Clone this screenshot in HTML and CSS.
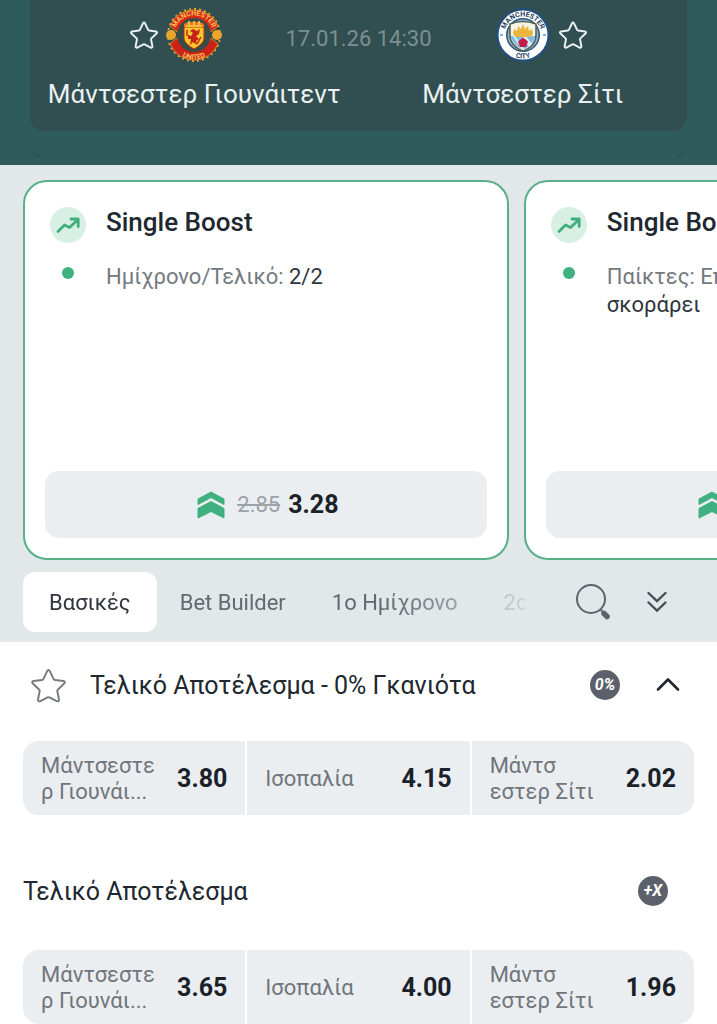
FILE: index.html
```
<!DOCTYPE html>
<html lang="el">
<head>
    <meta charset="UTF-8">
    <meta name="viewport" content="width=device-width, initial-scale=1">
    <title>Μάντσεστερ Γιουνάιτεντ - Μάντσεστερ Σίτι</title>
    <link rel="stylesheet" href="styles.css">
</head>
<body>
<!-- shared icons -->
<svg class="sprite" aria-hidden="true">
    <symbol id="star" viewBox="0 0 36 36">
        <path d="M16.6 3.2Q18 .8 19.4 3.2L23.3 11.4Q23.7 12.2 24.600 12.300L33.300 13.400Q35.800 14 34.100 16L27.500 22.400Q26.900 23 27.100 23.900L28.800 32.400Q28.900 35 26.500 34.100L18.900 30.200Q18 29.800 17.100 30.200L9.500 34.100Q7.100 35 7.200 32.400L8.900 23.900Q9.100 23 8.500 22.400L1.900 16Q.2 14 2.700 13.400L11.400 12.300Q12.300 12.200 12.700 11.400Z" fill="none" stroke="currentColor" stroke-linejoin="round"/>
    </symbol>
    <symbol id="trend" viewBox="0 0 36 36">
        <circle cx="18" cy="18" r="18" fill="#d8f0e4"/>
        <path d="M8 24.500L14.500 18L19.500 20.500L28 12.500M21 12H28.200V19.500" fill="none" stroke="#41ae7e" stroke-width="2.800" stroke-linecap="round" stroke-linejoin="round"/>
    </symbol>
    <symbol id="boost" viewBox="0 0 28 28">
        <path d="M1 8L14 1L27 8V13.500L14 6.500L1 13.500ZM1 17.500L14 10.500L27 17.500V27L14 20.500L1 27Z" fill="#3fb07f" stroke="#3fb07f" stroke-linejoin="round"/>
    </symbol>
</svg>

<header class="header">
    <div class="scoreboard">
        <div class="match">
            <button class="fav" aria-label="Μάντσεστερ Γιουνάιτεντ"><svg><use href="#star"/></svg></button>
            <svg class="crest" viewBox="0 0 56 56" aria-hidden="true">
                <circle cx="28" cy="28" r="26" fill="none" stroke="#e5a42d" stroke-width="2" stroke-dasharray="2 3" pathLength="160"/>
                <circle cx="28" cy="28" r="25" fill="#374c47"/>
                <path d="M4 19A26 26 0 0 1 52 19L45 25A18 18 0 0 0 11 25Z" fill="#d32a18" stroke="#df8a25" stroke-width="1"/>
                <path d="M4 37A26 26 0 0 0 52 37L45 31A18 18 0 0 1 11 31Z" fill="#cb2117" stroke="#df8a25" stroke-width="1"/>
                <circle cx="28" cy="28" r="17" fill="#374c47"/>
                <circle cx="5" cy="28" r="5" fill="#eba52c"/>
                <circle cx="51" cy="28" r="5" fill="#eba52c"/>
                <path d="M18 20H38V32Q37 37 28 42Q19 37 18 32Z" fill="#f5c92e" stroke="#cb2117"/>
                <path d="M18 20V17L22 15H34L38 17V20Z" fill="#e6782c"/>
                <path d="M20 19H36M23 14V18M28 14V18M33 14V18" stroke="#ffd240" stroke-width="1.500"/>
                <path d="M24 24L27 22L31 24L34 22L33 27L30 29L33 32L30 34L31 38L27 35L24 38L25 32L22 32L22 28L25 29L27 26Z" fill="#c82219"/>
                <path d="M21 23V29M35 30L31 37" stroke="#c82219" stroke-width="1.500"/>
                <path id="utd-top" d="M8.500 28A19.500 19.500 0 0 1 47.500 28" fill="none"/>
                <path id="utd-bottom" d="M3.500 28A24.500 24.500 0 0 0 52.500 28" fill="none"/>
                <text class="utd-text"><textPath href="#utd-top" startOffset="50%">MANCHESTER</textPath></text>
                <text class="utd-text"><textPath href="#utd-bottom" startOffset="50%">UNITED</textPath></text>
            </svg>
            <time class="kickoff" datetime="2026-01-17T14:30">17.01.26 14:30</time>
            <svg class="crest" viewBox="0 0 56 56" aria-hidden="true">
                <circle cx="28" cy="28" r="27" fill="#244f7b"/>
                <circle cx="28" cy="28" r="24.500" fill="#fff"/>
                <circle cx="28" cy="28" r="17" fill="#315578"/>
                <circle cx="28" cy="28" r="15.500" fill="#8db4d4"/>
                <path d="M15 17Q28 12 41 17V28Q41 39 28 44Q15 39 15 28Z" fill="#f7f3e5" stroke="#56604f" stroke-width="1.500"/>
                <path d="M16 29H40Q39 38 28 43Q17 38 16 29Z" fill="#82bce6"/>
                <path d="M18 29L27 43H30L20 29ZM27 29L34 40L37 37L31 29Z" fill="#d9edf7"/>
                <path d="M18 27L19 22L22 24L23 19L26 22L28 17L30 22L33 19L34 24L37 22L38 27L35 30H21Z" fill="#eab63d"/>
                <path d="M28 30.500L33 34.500L31 40H25L23 34.500Z" fill="#c41d45"/>
                <path d="M5 28H8M48 28H51" stroke="#7fb2de" stroke-width="2"/>
                <path id="city-top" d="M9.500 28A18.500 18.500 0 0 1 46.500 28" fill="none"/>
                <path id="city-bottom" d="M4.500 28A23.500 23.500 0 0 0 51.500 28" fill="none"/>
                <text class="city-text"><textPath href="#city-top" startOffset="50%">MANCHESTER</textPath></text>
                <text class="city-text"><textPath href="#city-bottom" startOffset="50%">CITY</textPath></text>
            </svg>
            <button class="fav" aria-label="Μάντσεστερ Σίτι"><svg><use href="#star"/></svg></button>
        </div>
        <div class="teams">
            <span>Μάντσεστερ Γιουνάιτεντ</span>
            <span>Μάντσεστερ Σίτι</span>
        </div>
    </div>
    <div class="header-edge"><i></i><i></i></div>
</header>

<section class="boosts">
    <article class="boost-card">
        <svg class="boost-icon"><use href="#trend"/></svg>
        <h2>Single Boost</h2>
        <i class="dot"></i>
        <p>Ημίχρονο/Τελικό: <b>2/2</b></p>
        <button class="boost-odds">
            <svg><use href="#boost"/></svg>
            <s>2.85</s>
            <strong>3.28</strong>
        </button>
    </article>
    <article class="boost-card">
        <svg class="boost-icon"><use href="#trend"/></svg>
        <h2>Single Boost</h2>
        <i class="dot"></i>
        <p>Παίκτες: Επόμενος<br><b>σκοράρει</b></p>
        <button class="boost-odds">
            <svg><use href="#boost"/></svg>
            <s>2.85</s>
            <strong>3.28</strong>
        </button>
    </article>
</section>

<nav class="tabs">
    <div class="tab-list">
        <button class="tab active">Βασικές</button>
        <button class="tab">Bet Builder</button>
        <button class="tab">1ο Ημίχρονο</button>
        <button class="tab">2ο Ημίχρονο</button>
    </div>
    <button class="tool" aria-label="Αναζήτηση">
        <svg viewBox="0 0 36 36" fill="none" stroke="#5b636b" stroke-linecap="round">
            <circle cx="16" cy="15" r="14" stroke-width="2"/>
            <path d="M26 26L27 27" stroke-width="2"/>
            <path d="M29 29.500L32 32.500" stroke-width="5.500"/>
        </svg>
    </button>
    <button class="tool" aria-label="Ανάπτυξη όλων">
        <svg viewBox="0 0 36 36" fill="none" stroke="#454d56" stroke-width="2.400" stroke-linecap="round">
            <path d="M9.500 9L18 17L26.500 9M9.500 18.500L18 26.500L26.500 18.500"/>
        </svg>
    </button>
</nav>

<main class="markets">
    <section class="market">
        <div class="market-head">
            <button class="fav" aria-label="Αγαπημένο"><svg><use href="#star"/></svg></button>
            <h3>Τελικό Αποτέλεσμα - 0% Γκανιότα</h3>
            <span class="badge">0%</span>
            <button class="toggle" aria-label="Σύμπτυξη">
                <svg viewBox="0 0 24 24" fill="none" stroke="#20272e" stroke-width="2.600" stroke-linecap="round" stroke-linejoin="round">
                    <path d="M2 16.500L12 6.500L22 16.500"/>
                </svg>
            </button>
        </div>
        <div class="outcomes">
            <button><span>Μάντσεστε<br>ρ Γιουνάι...</span><b>3.80</b></button>
            <button><span>Ισοπαλία</span><b>4.15</b></button>
            <button><span>Μάντσ<br>εστερ Σίτι</span><b>2.02</b></button>
        </div>
    </section>
    <section class="market">
        <div class="market-head">
            <h3>Τελικό Αποτέλεσμα</h3>
            <span class="badge last">+X</span>
        </div>
        <div class="outcomes">
            <button><span>Μάντσεστε<br>ρ Γιουνάι...</span><b>3.65</b></button>
            <button><span>Ισοπαλία</span><b>4.00</b></button>
            <button><span>Μάντσ<br>εστερ Σίτι</span><b>1.96</b></button>
        </div>
    </section>
</main>
</body>
</html>
```
FILE: styles.css
```
*{
    box-sizing: border-box;
}
body{
    margin: 0;
    font-family: Roboto, "Liberation Sans", sans-serif;
    font-size: 22px;
    color: #20272e;
    background: #fff;
    overflow-x: hidden;
}
button{
    margin: 0;
    padding: 0;
    border: 0;
    background: none;
    font: inherit;
    color: inherit;
    cursor: pointer;
}
svg{
    display: block;
}
h2,h3,p{
    margin: 0;
}
.sprite{
    position: absolute;
    width: 0;
    height: 0;
}

/* match header */
.header{
    padding: 0 30px 8px;
    background: #2e5c5a;
}
.scoreboard{
    padding: 7px 0 20px;
    border-radius: 0 0 14px 14px;
    background: #314e50;
    color: #e9f1f2;
}
.match{
    display: flex;
    justify-content: center;
    align-items: center;
}
.match .fav svg{
    width: 28px;
    height: 28px;
    stroke-width: 2.5;
}
.crest{
    width: 56px;
    height: 56px;
    margin: 0 8px;
}
.utd-text,
.city-text{
    font-size: 7px;
    font-weight: 700;
    text-anchor: middle;
    fill: #f9c25a;
}
.city-text{
    fill: #223c60;
}
.kickoff{
    margin: 6px 55px 0;
    color: #7c9092;
}
.teams{
    display: grid;
    grid-template-columns: 1fr 1fr;
    margin-top: 14px;
    font-size: 26px;
    line-height: 34px;
    text-align: center;
}
/* bottom corners of the card underneath */
.header-edge{
    display: flex;
    justify-content: space-between;
    align-items: flex-end;
    height: 26px;
}
.header-edge i{
    width: 10px;
    height: 10px;
    border-bottom: 2px solid #2a5250;
    border-radius: 0 0 0 10px;
}
.header-edge i:last-child{
    border-radius: 0 0 10px 0;
}

/* boosts carousel */
.boosts{
    display: flex;
    gap: 15px;
    padding: 15px 0 0 23px;
    overflow: hidden;
    background: #e2e7ea;
}
.boost-card{
    flex: 0 0 70%;
    display: grid;
    grid-template-columns: 36px 1fr;
    grid-template-rows: 36px 1fr auto;
    column-gap: 20px;
    row-gap: 20px;
    min-height: 380px;
    padding: 25px 20px 20px 25px;
    border: 2px solid #58b088;
    border-radius: 24px;
    background: #fff;
}
.boost-icon{
    width: 36px;
    height: 36px;
}
.boost-card h2{
    font-size: 26px;
    line-height: 30px;
    font-weight: 500;
}
.dot{
    width: 12px;
    height: 12px;
    margin: 4px auto;
    border-radius: 50%;
    background: #3fb07f;
}
.boost-card p{
    line-height: 28px;
    color: #757980;
}
.boost-card p b{
    font-weight: 400;
    color: #30363d;
}
.boost-odds{
    grid-column: 1 / -1;
    display: flex;
    justify-content: center;
    align-items: center;
    height: 67px;
    margin-left: -5px;
    padding-left: 4px;
    border-radius: 14px;
    background: #ebeef1;
}
.boost-odds svg{
    width: 28px;
    height: 28px;
    margin-right: 12px;
}
.boost-odds s{
    margin-right: 8px;
    color: #9da2a8;
}
.boost-odds strong{
    font-size: 25px;
    color: #1a2129;
}

/* tabs */
.tabs{
    display: flex;
    align-items: center;
    padding: 12px 42px 10px 23px;
    background: #e2e7ea;
}
.tab-list{
    flex: 1;
    display: flex;
    overflow: hidden;
    -webkit-mask-image: linear-gradient(to right, #000 72%, transparent 105%);
    mask-image: linear-gradient(to right, #000 72%, transparent 105%);
}
.tab{
    flex: none;
    height: 60px;
    padding: 0 23px;
    border-radius: 12px;
    color: #62696f;
}
.tab.active{
    padding: 0 26px;
    background: #fff;
    color: #30363d;
}
.tool{
    margin-left: 28px;
}
.tool:first-of-type{
    margin-left: 50px;
}
.tool svg{
    width: 36px;
    height: 36px;
}

/* markets */
.markets{
    padding: 0 23px;
}
.market + .market{
    padding-top: 33px;
}
.market-head{
    display: flex;
    align-items: center;
    height: 86px;
    margin-bottom: 13px;
}
.market + .market .market-head{
    margin-bottom: 16px;
}
.market-head .fav{
    margin: 0 24px 0 8px;
    color: #777b80;
}
.market-head .fav svg{
    width: 35px;
    height: 35px;
    stroke-width: 2;
}
.market-head h3{
    flex: 1;
    font-size: 25px;
    font-weight: 400;
}
.badge{
    width: 30px;
    height: 30px;
    border-radius: 50%;
    background: #5b606b;
    color: #fff;
    font-size: 16px;
    line-height: 30px;
    font-weight: 700;
    font-style: italic;
    text-align: center;
}
.badge.last{
    margin-right: 26px;
}
.toggle{
    margin: 0 14px 0 36px;
}
.toggle svg{
    width: 24px;
    height: 24px;
}
.outcomes{
    display: grid;
    grid-template-columns: 1fr 1fr 1fr;
    gap: 2px;
    border-radius: 16px;
    overflow: hidden;
}
.outcomes button{
    display: flex;
    justify-content: space-between;
    align-items: center;
    height: 74px;
    padding: 2px 18px 0;
    background: #ebeef1;
    line-height: 26px;
    text-align: left;
    white-space: nowrap;
}
.outcomes span{
    color: #70757c;
}
.outcomes b{
    font-size: 25px;
    color: #1a2129;
}
```
